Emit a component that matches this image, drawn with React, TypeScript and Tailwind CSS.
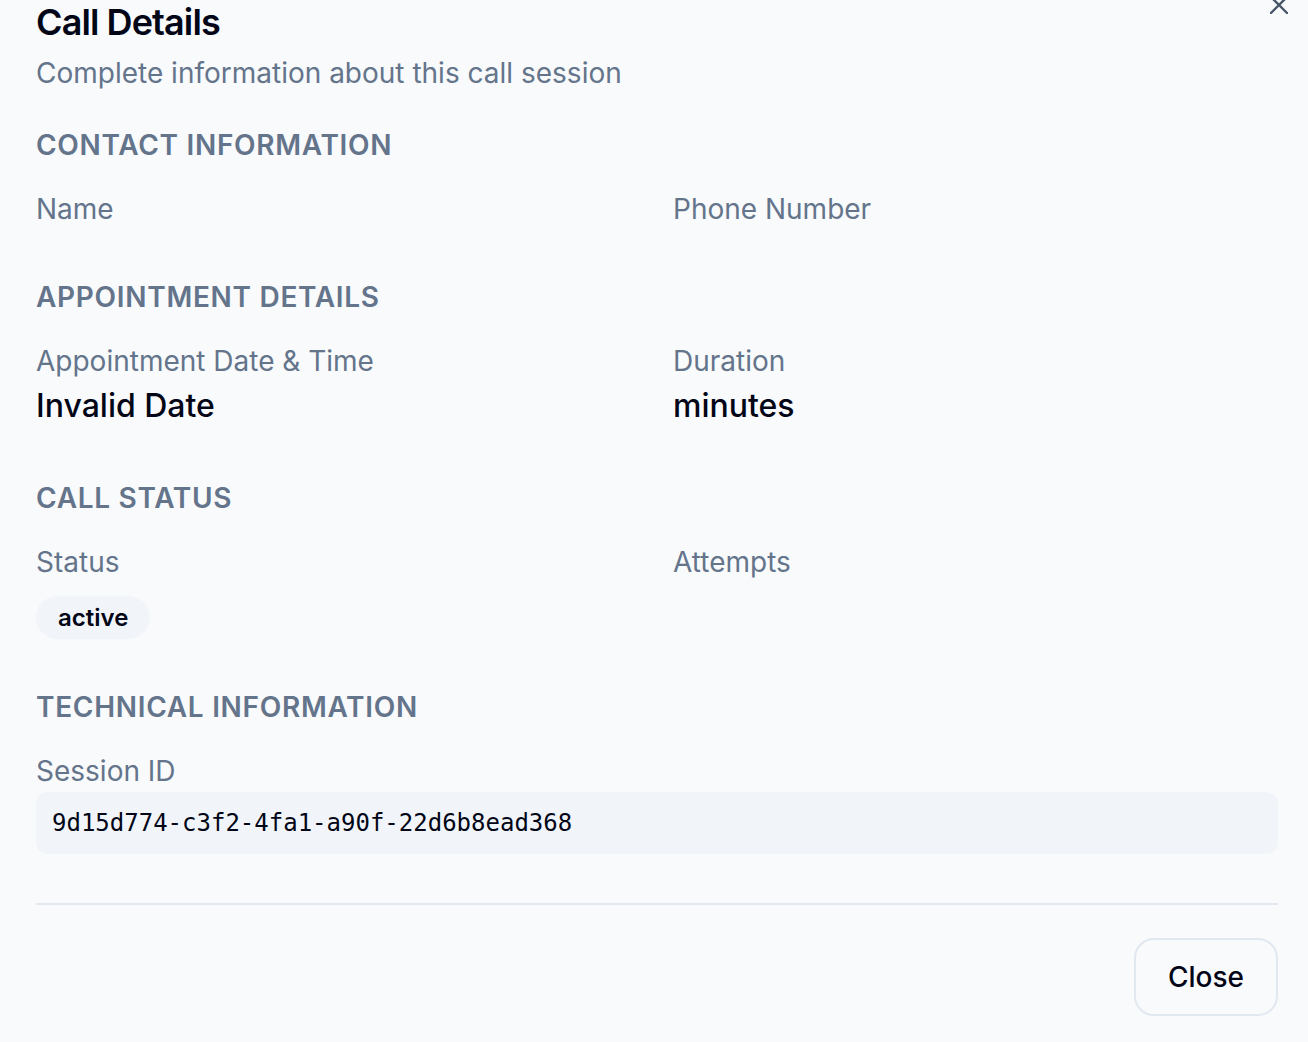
import React from "react";

const Section = ({ title, children }: { title: string; children: React.ReactNode }) => (
    <section>
        <h3 className="text-[28px] leading-[40px] font-semibold uppercase tracking-wide text-[#64748b] mb-6">
            {title}
        </h3>
        {children}
    </section>
);

const Field = ({ label, children }: { label: string; children?: React.ReactNode }) => (
    <div>
        <div className="text-[28px] leading-[40px] text-[#64748b]">{label}</div>
        {children}
    </div>
);

const Value = ({ children }: { children: React.ReactNode }) => (
    <div className="mt-px text-[32px] leading-[48px] font-medium text-[#020617]">{children}</div>
);

export default function App() {
    return (
        <div
            className="relative min-h-[1042px] bg-[#f8fafc] pl-9 pr-[30px] pt-1 text-[#020617]"
            style={{ fontFamily: "Inter, 'Noto Sans', sans-serif" }}
        >
            {/* close X, cut off at the top edge */}
            <svg
                className="absolute right-[20px] top-[-4px]"
                width="18"
                height="18"
                viewBox="0 0 18 18"
                fill="none"
                stroke="#475569"
                strokeWidth="2.4"
                strokeLinecap="round"
            >
                <path d="M1 1L17 17M17 1L1 17" />
            </svg>

            {/* Header */}
            <h2 className="text-[36px] leading-[36px] font-semibold tracking-tight">Call Details</h2>
            <p className="mt-[13px] text-[28px] leading-[40px] text-[#64748b]">
                Complete information about this call session
            </p>

            <div className="mt-8 flex flex-col gap-12">
                <Section title="Contact Information">
                    <div className="grid grid-cols-2 gap-x-8">
                        <Field label="Name" />
                        <Field label="Phone Number" />
                    </div>
                </Section>

                <Section title="Appointment Details">
                    <div className="grid grid-cols-2 gap-x-8">
                        <Field label="Appointment Date & Time">
                            <Value>Invalid Date</Value>
                        </Field>
                        <Field label="Duration">
                            <Value>minutes</Value>
                        </Field>
                    </div>
                </Section>

                <Section title="Call Status">
                    <div className="grid grid-cols-2 gap-x-8">
                        <Field label="Status">
                            <span className="mt-[14px] inline-flex h-[43px] items-center rounded-full bg-[#f1f5f9] px-[22px] text-[24px] font-semibold">
                                active
                            </span>
                        </Field>
                        <Field label="Attempts" />
                    </div>
                </Section>

                <Section title="Technical Information">
                    <Field label="Session ID">
                        <div
                            className="mt-px rounded-xl bg-[#f1f5f9] px-4 py-[15px] text-[24px] leading-[32px]"
                            style={{ fontFamily: "'DejaVu Sans Mono', 'Liberation Mono', monospace" }}
                        >
                            9d15d774-c3f2-4fa1-a90f-22d6b8ead368
                        </div>
                    </Field>
                </Section>
            </div>

            {/* Footer */}
            <div className="mt-[49px] border-t-2 border-[#e2e8f0] pt-[33px] flex justify-end">
                <button className="h-[78px] rounded-[20px] border-2 border-[#e2e8f0] bg-[#f8fafc] px-8 text-[28px] font-medium text-[#020617]">
                    Close
                </button>
            </div>
        </div>
    );
}
